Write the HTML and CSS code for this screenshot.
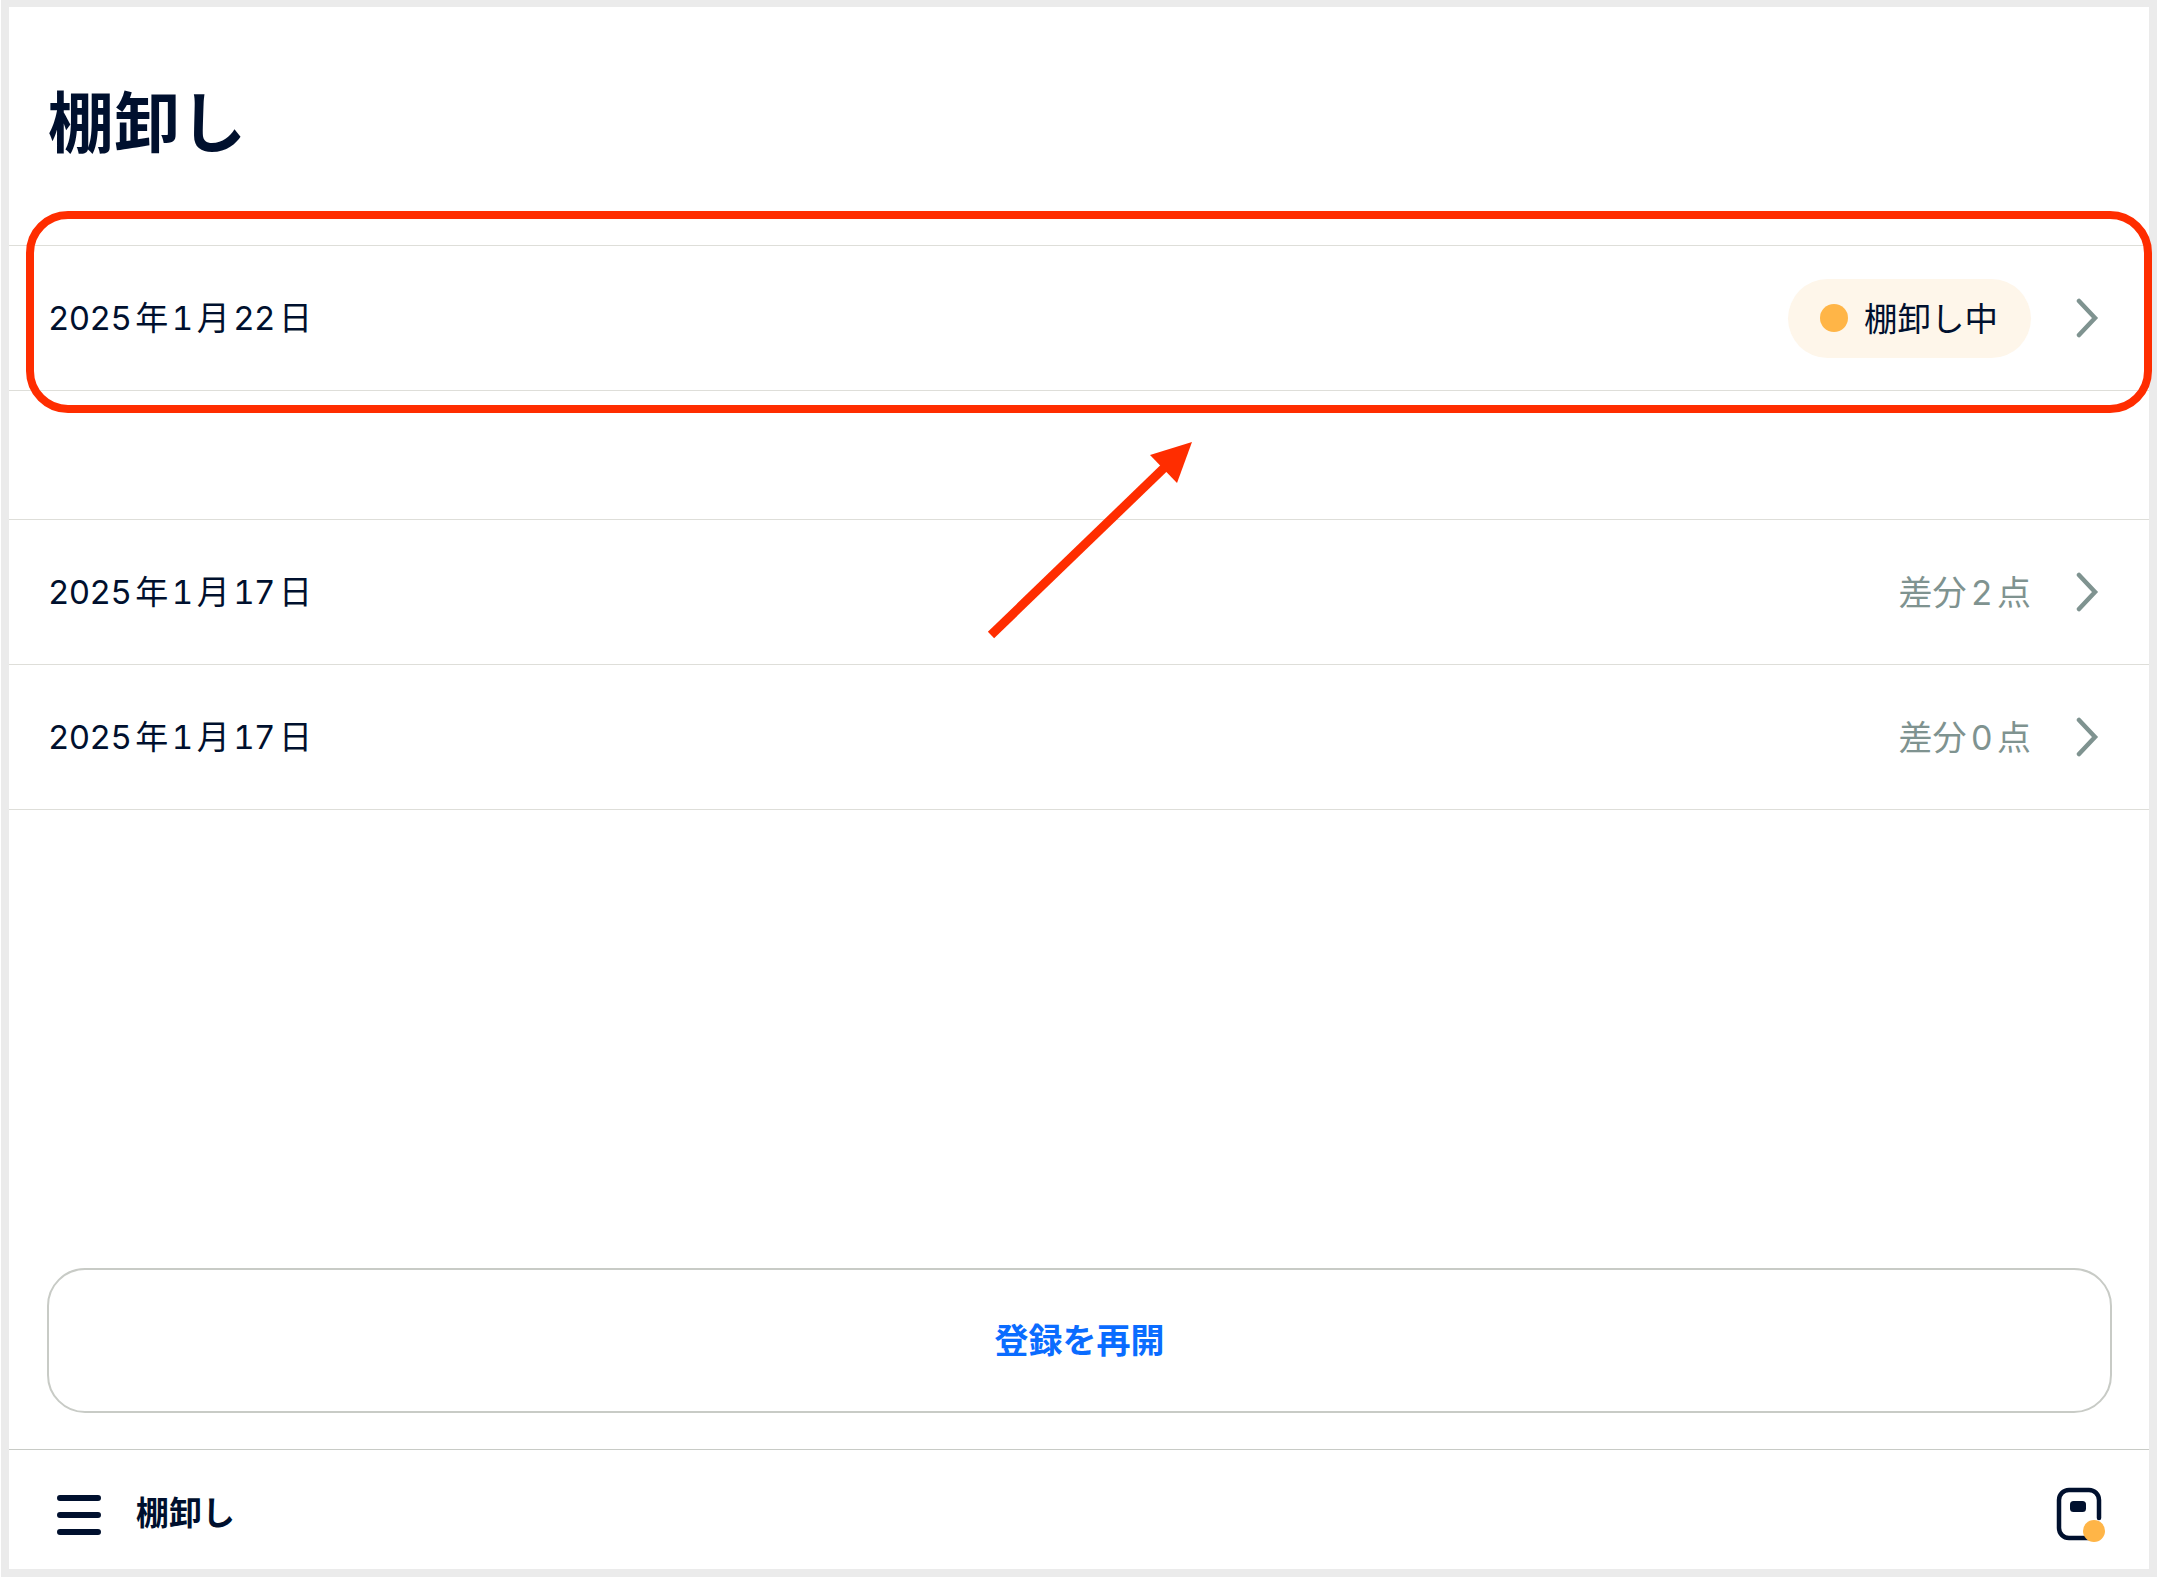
FILE: index.html
```html
<!DOCTYPE html>
<html lang="ja">
<head>
<meta charset="utf-8">
<title>棚卸し</title>
<link rel="stylesheet" href="styles.css">
</head>
<body>
<div class="frame">
  <header class="page-head"><h1 class="page-title">棚卸し</h1></header>
  <section class="list list-current">
    <div class="row">
      <span class="row-date">2025年1月22日</span>
      <span class="pill"><span class="pill-dot"></span><span class="pill-text">棚卸し中</span></span>
      <svg class="chevron" viewBox="0 0 24 40" width="24" height="40"><path d="M4 3 L20 20 L4 37" /></svg>
    </div>
  </section>
  <section class="list list-past">
    <div class="row">
      <span class="row-date">2025年1月17日</span>
      <span class="row-diff">差分2点</span>
      <svg class="chevron" viewBox="0 0 24 40" width="24" height="40"><path d="M4 3 L20 20 L4 37" /></svg>
    </div>
    <div class="row">
      <span class="row-date">2025年1月17日</span>
      <span class="row-diff">差分0点</span>
      <svg class="chevron" viewBox="0 0 24 40" width="24" height="40"><path d="M4 3 L20 20 L4 37" /></svg>
    </div>
  </section>
  <div class="spacer"></div>
  <div class="action"><button class="action-btn">登録を再開</button></div>
  <footer class="footer">
    <svg class="menu-icon" viewBox="0 0 44 40" width="44" height="40"><path d="M3 3H41M3 20H41M3 37H41" /></svg>
    <span class="footer-title">棚卸し</span>
    <svg class="device-icon" viewBox="0 0 56 58" width="56" height="58">
      <path class="device-body" d="M37 52 H14 A10 10 0 0 1 4 42 V14 A10 10 0 0 1 14 4 H34 A10 10 0 0 1 44 14 V32" />
      <rect class="device-key" x="15" y="15" width="16" height="11" rx="3.5" />
      <circle class="device-dot" cx="39" cy="45" r="11" />
    </svg>
  </footer>
</div>
<svg class="annotation" viewBox="0 0 2158 1579" width="2158" height="1579">
  <rect class="note-box" x="30" y="215" width="2118" height="194" rx="38" />
  <path class="note-shaft" d="M991 635 L1165 467" />
  <path class="note-head" d="M1192 442 L1150 455 L1177 483 Z" />
</svg>
</body>
</html>
```
FILE: styles.css
```css
* { box-sizing: border-box; }
html, body { margin: 0; padding: 0; }
body {
  position: relative;
  width: 2158px;
  height: 1579px;
  background: #fff;
  overflow: hidden;
  color: #00102e;
  font-family: Inter, "Noto Sans CJK JP", sans-serif;
  font-variant-numeric: tabular-nums;
  text-autospace: normal;
}
.frame {
  margin-left: 1px;
  width: 2156px;
  height: 1577px;
  border: 8px solid #ebebeb;
  border-top-width: 7px;
  background: #fff;
  display: flex;
  flex-direction: column;
}
.page-head {
  height: 238px;
  flex: none;
  padding: 72px 0 0 39px;
}
.page-title {
  margin: 0;
  font-size: 66px;
  line-height: 88px;
  font-weight: 700;
}
.list { border-top: 1px solid #deded9; flex: none; }
.list-past { margin-top: 128px; }
.row {
  height: 145px;
  border-bottom: 1px solid #deded9;
  padding: 0 50px 0 39px;
  display: flex;
  align-items: center;
}
.row-date {
  flex: 1;
  font-size: 33px;
  letter-spacing: -0.6px;
  padding-bottom: 4px;
}
.pill {
  height: 79px;
  width: 243px;
  border-radius: 40px;
  background: #fef6ea;
  display: flex;
  align-items: center;
  padding-left: 32px;
  gap: 16px;
}
.pill-dot {
  width: 28px;
  height: 28px;
  border-radius: 50%;
  background: #ffb547;
  flex: none;
}
.pill-text { font-size: 33.5px; white-space: nowrap; padding-bottom: 4px; }
.row-diff { font-size: 34px; color: #7f9390; padding-bottom: 4px; }
.chevron { margin-left: 44px; flex: none; }
.chevron path {
  fill: none;
  stroke: #7f9390;
  stroke-width: 4.5;
  stroke-linecap: round;
  stroke-linejoin: miter;
}
.spacer { flex: 1; }
.action { padding: 0 37px 36px 38px; flex: none; }
.action-btn {
  display: block;
  width: 100%;
  height: 145px;
  border: 2px solid #c8cbc6;
  border-radius: 38px;
  background: #fff;
  color: #0a6cff;
  font-family: inherit;
  font-size: 34px;
  font-weight: 700;
  padding: 0 0 4px;
}
.footer {
  height: 120px;
  flex: none;
  border-top: 1px solid #c8cbc6;
  padding: 10px 38px 0 48px;
  display: flex;
  align-items: center;
}
.menu-icon path {
  fill: none;
  stroke: #00102e;
  stroke-width: 6;
  stroke-linecap: round;
}
.footer-title {
  flex: 1;
  margin-left: 35px;
  font-size: 33px;
  font-weight: 700;
  padding-bottom: 8px;
}
.device-body { fill: none; stroke: #00102e; stroke-width: 4.5; stroke-linecap: round; }
.device-key { fill: #00102e; }
.device-dot { fill: #ffb547; }
.annotation {
  position: absolute;
  left: 0;
  top: 0;
  pointer-events: none;
}
.note-box { fill: none; stroke: #ff2d00; stroke-width: 8; }
.note-shaft { fill: none; stroke: #ff2d00; stroke-width: 9; }
.note-head { fill: #ff2d00; }
```
